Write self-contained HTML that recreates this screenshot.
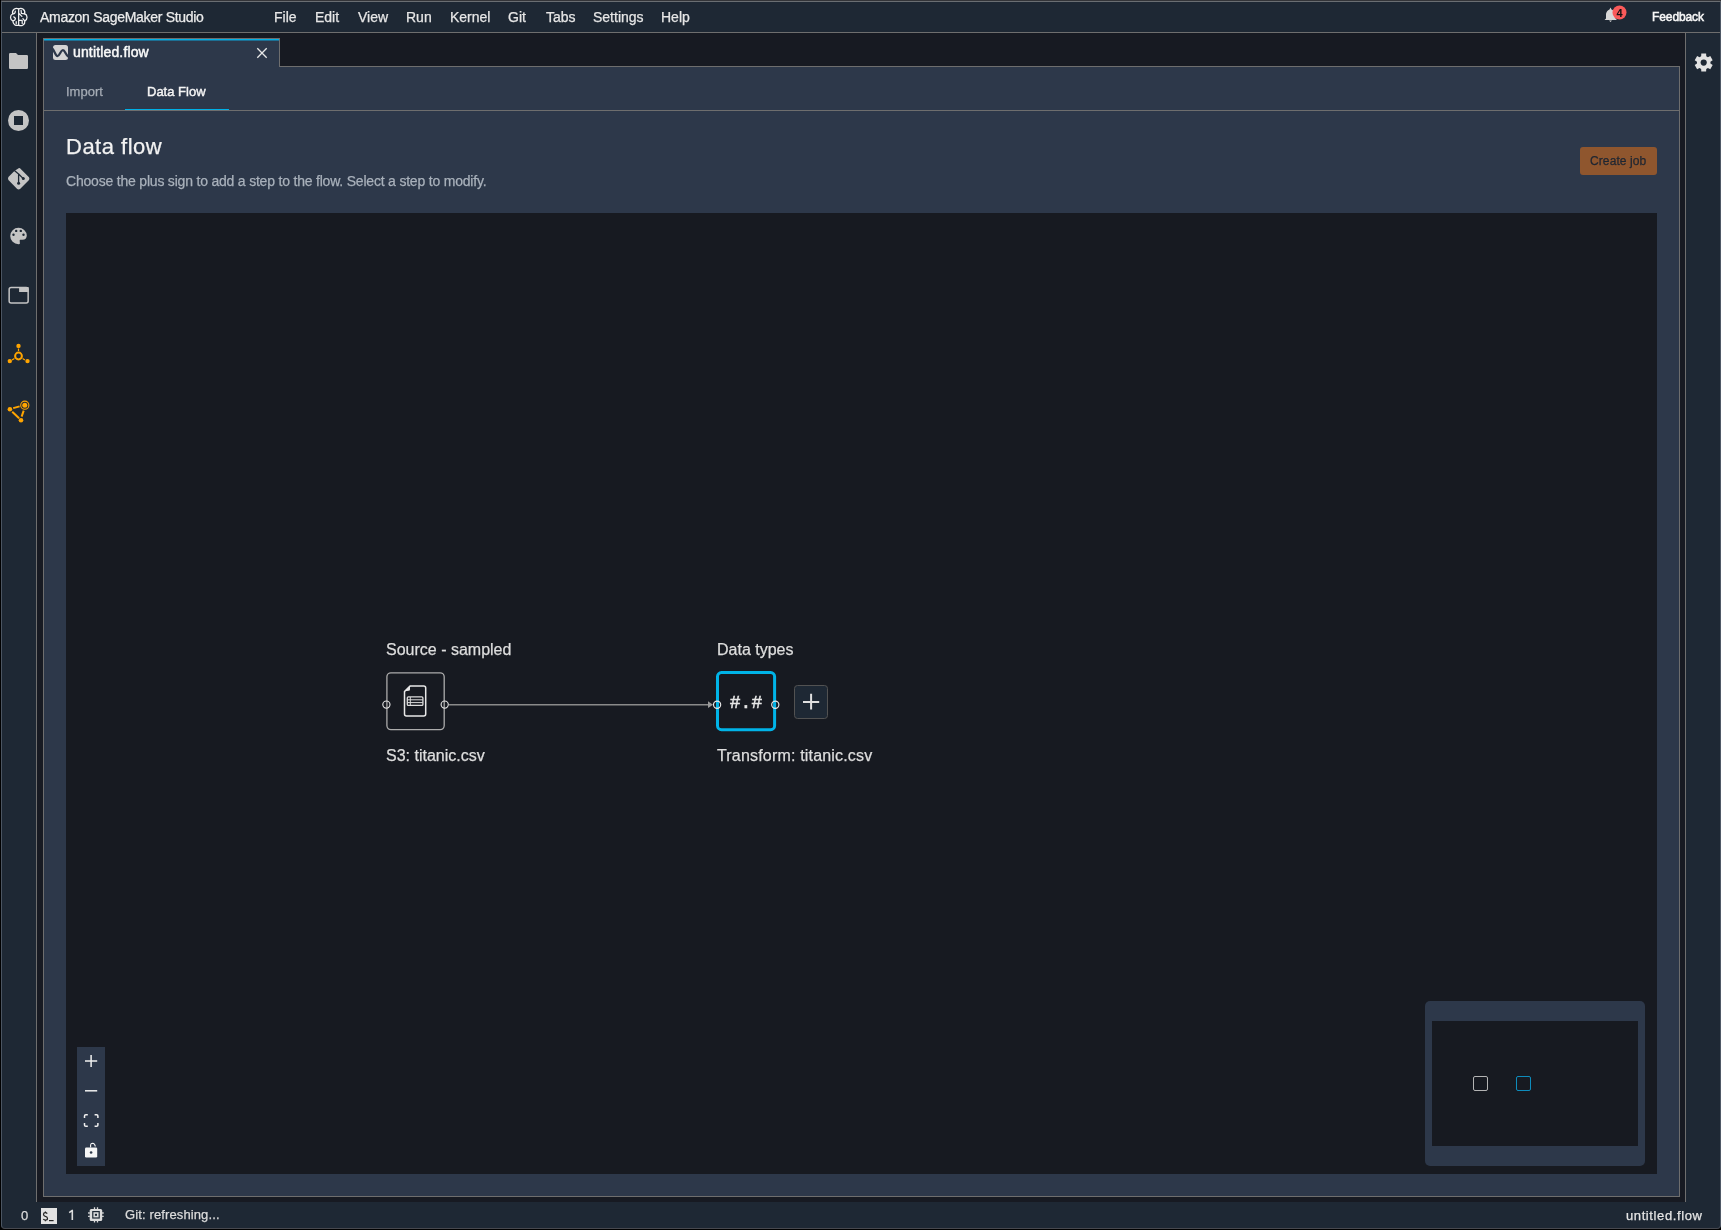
<!DOCTYPE html>
<html><head><meta charset="utf-8">
<style>
html,body{margin:0;padding:0;width:1721px;height:1230px;overflow:hidden;background:#000;}
body{position:relative;font-family:"Liberation Sans",sans-serif;}
.a{position:absolute;}
.t{position:absolute;white-space:pre;line-height:1;will-change:transform;-webkit-text-stroke-width:0.25px;}
svg.ov{position:absolute;left:0;top:0;}
</style></head><body>
<!-- window frame -->
<div class="a" style="left:1px;top:0;width:1720px;height:1px;background:#333438"></div>
<div class="a" style="left:1px;top:1px;width:1720px;height:1228px;box-sizing:border-box;border:1px solid #6a6e72;border-left-color:#4b5562;border-right-color:#4f5966;border-bottom-color:#48494f;background:#1e2834;border-radius:0 0 4px 4px"></div>
<div class="a" style="left:2px;top:32px;width:1718px;height:1px;background:#6e6e6e"></div>
<div class="a" style="left:37px;top:33px;width:1648px;height:1169px;background:#171a22"></div>
<div class="a" style="left:36px;top:33px;width:1px;height:1169px;background:#6e6e6e"></div>
<div class="a" style="left:1685px;top:33px;width:1px;height:1169px;background:#6e6e6e"></div>

<!-- panel -->
<div class="a" style="left:43px;top:66px;width:1637px;height:1131px;box-sizing:border-box;border:1px solid #6e6e6e;border-top:none;background:#2d384a"></div>
<div class="a" style="left:279px;top:66px;width:1401px;height:1px;background:#6e6e6e"></div>
<div class="a" style="left:43px;top:38px;width:237px;height:28px;box-sizing:border-box;border:1px solid #6e6e6e;border-bottom:none;background:#2d384a"></div>
<div class="a" style="left:44px;top:39px;width:235px;height:1px;background:#00b0e6"></div>
<div class="a" style="left:44px;top:40px;width:235px;height:1px;background:#1d6f93"></div>

<!-- subtabs -->
<div class="a" style="left:44px;top:110px;width:1635px;height:1px;background:#6e6e6e"></div>
<div class="a" style="left:125px;top:109px;width:104px;height:1px;background:#00b0e6"></div>

<!-- canvas -->
<div class="a" style="left:66px;top:213px;width:1591px;height:961px;background:#171a21"></div>

<!-- create job -->
<div class="a" style="left:1580px;top:147px;width:77px;height:28px;background:#8f562e;border-radius:3px"></div>

<!-- zoom controls -->
<div class="a" style="left:77px;top:1047px;width:28px;height:119px;background:#2d384a"></div>
<!-- minimap -->
<div class="a" style="left:1425px;top:1001px;width:220px;height:165px;background:#2d384a;border-radius:5px"></div>
<div class="a" style="left:1432px;top:1021px;width:206px;height:125px;background:#171a21"></div>
<div class="a" style="left:1473px;top:1076px;width:15px;height:15px;box-sizing:border-box;border:1.5px solid #b4b4b4;border-radius:2px"></div>
<div class="a" style="left:1516px;top:1076px;width:15px;height:15px;box-sizing:border-box;border:1.5px solid #0e8cbc;border-radius:2px"></div>

<!-- texts -->
<div class="t" style="left:40px;top:10px;font-size:14px;color:#ececec;letter-spacing:-0.3px">Amazon SageMaker Studio</div>
<div class="t" style="left:274px;top:10px;font-size:14px;color:#e6e6e6">File</div>
<div class="t" style="left:315px;top:10px;font-size:14px;color:#e6e6e6">Edit</div>
<div class="t" style="left:358px;top:10px;font-size:14px;color:#e6e6e6">View</div>
<div class="t" style="left:406px;top:10px;font-size:14px;color:#e6e6e6">Run</div>
<div class="t" style="left:450px;top:10px;font-size:14px;color:#e6e6e6">Kernel</div>
<div class="t" style="left:508px;top:10px;font-size:14px;color:#e6e6e6">Git</div>
<div class="t" style="left:546px;top:10px;font-size:14px;color:#e6e6e6">Tabs</div>
<div class="t" style="left:593px;top:10px;font-size:14px;color:#e6e6e6">Settings</div>
<div class="t" style="left:661px;top:10px;font-size:14px;color:#e6e6e6">Help</div>
<div class="t" style="left:1651.6px;top:11px;font-size:12px;color:#f8f8f8;letter-spacing:-0.1px;-webkit-text-stroke-width:0.5px">Feedback</div>

<div class="t" style="left:72.6px;top:45px;font-size:14px;color:#fafafa;letter-spacing:0.15px;-webkit-text-stroke-width:0.45px">untitled.flow</div>
<div class="t" style="left:66px;top:84.6px;font-size:13px;color:#a6adb6">Import</div>
<div class="t" style="left:147.4px;top:84.6px;font-size:13px;color:#f6f6f6;-webkit-text-stroke-width:0.4px">Data Flow</div>
<div class="t" style="left:66px;top:136px;font-size:22px;color:#f2f2f2;letter-spacing:0.5px">Data flow</div>
<div class="t" style="left:66px;top:174px;font-size:14px;color:#a9b1bb;letter-spacing:-0.2px">Choose the plus sign to add a step to the flow. Select a step to modify.</div>
<div class="t" style="left:1590.2px;top:155px;font-size:12px;letter-spacing:0.1px;color:#1e2632">Create job</div>

<div class="t" style="left:386px;top:642px;font-size:16px;color:#dedede">Source - sampled</div>
<div class="t" style="left:386px;top:747.5px;font-size:16px;color:#dedede">S3: titanic.csv</div>
<div class="t" style="left:717px;top:642px;font-size:16px;color:#dedede">Data types</div>
<div class="t" style="left:717px;top:748px;font-size:16px;color:#dedede;letter-spacing:0.18px">Transform: titanic.csv</div>

<div class="t" style="left:21px;top:1208.5px;font-size:13px;color:#dcdcdc">0</div>
<div class="t" style="left:124.5px;top:1208px;font-size:13px;letter-spacing:0.12px;color:#dcdcdc">Git: refreshing...</div>
<div class="t" style="left:1625.5px;top:1209px;font-size:13px;color:#e4e4e4;letter-spacing:0.6px">untitled.flow</div>

<svg class="ov" width="1721" height="1230" viewBox="0 0 1721 1230">
  <!-- brain logo -->
  <g fill="none" stroke="#f2f2f2" stroke-width="1.25" stroke-linejoin="round" stroke-linecap="round">
    <path d="M18.66,8.9 A4.1,4.1 0 0 1 24.58,13.7 A4.0,4.0 0 0 1 24.8,20.98 A4.1,4.1 0 0 1 18.66,25.1 A4.1,4.1 0 0 1 12.97,20.98 A4.0,4.0 0 0 1 12.74,13.7 A4.1,4.1 0 0 1 18.66,8.9 Z"/>
    <path d="M18.66,9.2 L18.66,24.8 M12.9,13.8 Q15.2,14 15.3,11.2 M18.66,13.2 L21.9,16.4 M24.5,13.8 L21.4,13.4 L21.1,10.4 M13,20.9 Q15.3,20.6 15.4,18.3 L13.7,16.8 M18.66,20.4 L22.2,20.4 L22.2,23.4 M24.7,20.9 L22.9,18.7 M16.2,23.8 L16.2,21.6"/>
  </g>
  <!-- folder -->
  <path d="M9,54.2 Q9,53 10.2,53 L16,53 L18,55 L26.8,55 Q28,55 28,56.2 L28,67.8 Q28,69 26.8,69 L10.2,69 Q9,69 9,67.8 Z" fill="#c4c4c4"/>
  <!-- stop circle -->
  <circle cx="18.5" cy="120.5" r="10.5" fill="#c4c4c4"/>
  <rect x="14" y="116" width="9" height="9" fill="#1e2834"/>
  <!-- git -->
  <path d="M18.6,168.2 Q19.3,167.6 20,168.2 L29,177.2 Q29.8,178.6 29,180 L20,189 Q18.6,189.8 17.2,189 L8.4,180.1 Q7.6,178.6 8.4,177.1 L14.4,171.1 Z" fill="#c4c4c4"/>
  <path d="M13.5,169.8 L18.6,174 L18.6,183.3 M18.6,174 L23.3,178.6" fill="none" stroke="#1e2834" stroke-width="1.3"/>
  <circle cx="18.6" cy="183.3" r="1.5" fill="#1e2834"/>
  <circle cx="23.3" cy="178.6" r="1.5" fill="#1e2834"/>
  <!-- palette -->
  <path d="M18.5,227.7 A8.3,8.3 0 0 1 26.8,235.5 Q26.6,239.7 22.5,239.7 L20.2,239.8 Q19.6,240 19.7,240.8 L19.9,243.5 Q19.9,244.4 18.5,244.3 A8.3,8.3 0 0 1 18.5,227.7 Z" fill="#c4c4c4"/>
  <circle cx="16.2" cy="230.9" r="1.2" fill="#1e2834"/>
  <circle cx="20.8" cy="230.9" r="1.2" fill="#1e2834"/>
  <circle cx="13.5" cy="234.7" r="1.2" fill="#1e2834"/>
  <circle cx="23.5" cy="234.7" r="1.2" fill="#1e2834"/>
  <!-- window -->
  <rect x="9.15" y="287.45" width="19" height="15.5" rx="2" fill="none" stroke="#c4c4c4" stroke-width="1.5"/>
  <rect x="19.1" y="287" width="9.5" height="5" fill="#c4c4c4"/>
  <!-- orange icon 1 -->
  <g fill="#ffa500" stroke="#ffa500">
    <circle cx="18.5" cy="345.9" r="2.2" stroke="none"/>
    <circle cx="9.8" cy="361.1" r="2.2" stroke="none"/>
    <circle cx="27.5" cy="361.1" r="2.2" stroke="none"/>
    <circle cx="18.5" cy="356" r="3.4" fill="none" stroke-width="2"/>
    <path d="M18.5,348.6 L18.5,351 M12.1,360.1 L14.4,358.6 M24.9,360.1 L22.6,358.6" stroke-width="1.2" fill="none"/>
  </g>
  <!-- orange icon 2 -->
  <g fill="#ffa500" stroke="#ffa500">
    <circle cx="24.8" cy="405.2" r="4.1" fill="none" stroke-width="1.1"/>
    <circle cx="24.8" cy="405.2" r="2.5" stroke="none"/>
    <circle cx="9.9" cy="409.3" r="2.3" stroke="none"/>
    <circle cx="21" cy="420.2" r="2.3" stroke="none"/>
    <path d="M13.2,408.1 L19.6,406.4 M12.2,411.7 L19.1,418.2 M21.6,416.6 L23.7,410.6" stroke-width="2" fill="none"/>
  </g>
  <!-- gear -->
  <path transform="translate(0,0.5)" d="M1710.43,61.15 L1712.68,59.69 L1710.28,55.52 L1707.89,56.74 L1706.25,55.80 L1706.11,53.12 L1701.29,53.12 L1701.15,55.80 L1699.51,56.74 L1697.12,55.52 L1694.72,59.69 L1696.97,61.15 L1696.97,63.05 L1694.72,64.51 L1697.12,68.68 L1699.51,67.46 L1701.15,68.40 L1701.29,71.08 L1706.11,71.08 L1706.25,68.40 L1707.89,67.46 L1710.28,68.68 L1712.68,64.51 L1710.43,63.05Z" fill="#e2e2e2"/>
  <circle cx="1703.7" cy="62.6" r="3.1" fill="#1e2834"/>
  <!-- bell -->
  <path d="M1610.5,7.5 L1611.5,9.5 Q1615,10.5 1615.5,14 L1615.5,18.5 L1617,20 L1604.5,20 L1606,18.5 L1606,14 Q1606.5,10.5 1609.5,9.5 Z" fill="#d8d8d8"/>
  <path d="M1609,20.5 L1612,20.5 L1610.5,22 Z" fill="#d8d8d8"/>
  <circle cx="1619.5" cy="12.5" r="7" fill="#fa5a5a"/>
  <text x="1619.6" y="16.6" style="font-family:'Liberation Sans'" font-size="11" font-weight="700" text-anchor="middle" fill="#111">4</text>
  <!-- tab icon -->
  <rect x="53" y="45" width="15" height="15" rx="2.5" fill="#d4d4d4"/>
  <path d="M52.3,48.6 C54.8,51.5 55.6,56.1 57.5,56.1 C59.6,56.1 60.6,50.2 62.9,50.2 C65,50.2 65.8,55.5 68.5,56.8" fill="none" stroke="#2d384a" stroke-width="2.3"/>
  <!-- close X -->
  <path d="M257.3,48.3 L266.7,57.7 M266.7,48.3 L257.3,57.7" stroke="#e8e8e8" stroke-width="1.3"/>

  <!-- node 1 -->
  <rect x="386.9" y="672.8" width="57.3" height="56.8" rx="4" fill="#171a21" stroke="#acacac" stroke-width="1.3"/>
  <line x1="449" y1="704.7" x2="709" y2="704.7" stroke="#8a8a8a" stroke-width="1.5"/>
  <path d="M708,701.3 L713,704.7 L708,708.1 Z" fill="#9a9a9a"/>
  <circle cx="386.4" cy="704.6" r="3.6" fill="none" stroke="#e0e0e0" stroke-width="1.15"/>
  <circle cx="444.7" cy="704.6" r="3.6" fill="none" stroke="#e0e0e0" stroke-width="1.15"/>
  <!-- file icon -->
  <path d="M410,686.1 L423.7,686.1 Q425.7,686.1 425.7,688.1 L425.7,714 Q425.7,716 423.7,716 L406.5,716 Q404.5,716 404.5,714 L404.5,691.5 Z" fill="none" stroke="#e8e8e8" stroke-width="1.5" stroke-linejoin="round"/>
  <path d="M410,686.3 L410,689.5 Q410,690.8 408.7,690.8 L404.8,691.2 Z" fill="#e8e8e8"/>
  <rect x="407.3" y="696.9" width="15.6" height="8.5" rx="1" fill="none" stroke="#dcdcdc" stroke-width="1.3"/>
  <path d="M407.3,699.8 L422.9,699.8 M407.3,702.6 L422.9,702.6 M410.3,697 L410.3,705.3" stroke="#dcdcdc" stroke-width="1"/>
  <!-- node 2 -->
  <rect x="717.5" y="672.6" width="57.1" height="57.1" rx="4" fill="#171a21" stroke="#00b4e8" stroke-width="3"/>
  <circle cx="717.1" cy="704.7" r="3.6" fill="none" stroke="#e8e8e8" stroke-width="1.15"/>
  <circle cx="775.3" cy="704.7" r="3.6" fill="none" stroke="#e8e8e8" stroke-width="1.15"/>
  <!-- plus button -->
  <rect x="794.5" y="685.5" width="33" height="33" rx="3" fill="#1e2834" stroke="#525252" stroke-width="1"/>
  <path d="M803,701.9 L819.2,701.9 M811.1,693.7 L811.1,709.6" stroke="#e0e0e0" stroke-width="2"/>

  <!-- zoom controls icons -->
  <path d="M85,1061 L97.2,1061 M91.1,1055 L91.1,1067" stroke="#f0f0f0" stroke-width="1.5"/>
  <path d="M85,1090.8 L97.2,1090.8" stroke="#f0f0f0" stroke-width="1.5"/>
  <path d="M84.5,1118 L84.5,1116 Q84.5,1114.7 85.8,1114.7 L87.8,1114.7 M94.6,1114.7 L96.6,1114.7 Q97.9,1114.7 97.9,1116 L97.9,1118 M97.9,1123 L97.9,1125 Q97.9,1126.3 96.6,1126.3 L94.6,1126.3 M87.8,1126.3 L85.8,1126.3 Q84.5,1126.3 84.5,1125 L84.5,1123" fill="none" stroke="#f0f0f0" stroke-width="1.5"/>
  <rect x="85" y="1147.5" width="12.2" height="10" rx="1.2" fill="#f6f6f6"/>
  <path d="M90.6,1147.5 L90.6,1145 Q90.8,1143.2 92.6,1143.2 Q95,1143.5 95.3,1146.5" fill="none" stroke="#f6f6f6" stroke-width="1.1"/>
  <circle cx="91.1" cy="1152.5" r="1.3" fill="#2d384a"/>

  <!-- status bar icons -->
  <rect x="41" y="1208" width="16" height="16" fill="#e2e2e2"/>
  <path d="M47.2,1213.6 Q46.6,1212.6 45.4,1212.6 Q43.5,1212.6 43.5,1214.3 Q43.5,1215.8 45.4,1216.3 Q47.5,1216.8 47.5,1218.5 Q47.5,1220.1 45.4,1220.1 Q44,1220.1 43.3,1219 M45.4,1211.5 L45.4,1212.6 M45.4,1220.1 L45.4,1221.3" fill="none" stroke="#222" stroke-width="1.2"/>
  <path d="M49,1220.6 L53.6,1220.6" stroke="#222" stroke-width="1.2"/>
  <path d="M69.2,1212.6 L72.3,1210.4 L72.3,1220.1" fill="none" stroke="#dcdcdc" stroke-width="1.6" stroke-linejoin="round"/>
  <rect x="89.7" y="1208.9" width="12.5" height="12" rx="1.5" fill="#dcdcdc"/>
  <rect x="92.2" y="1211" width="7.6" height="7.6" fill="#1e2834"/>
  <rect x="93.4" y="1212.2" width="5.2" height="5.2" fill="#dcdcdc"/>
  <rect x="94.9" y="1213.8" width="2.1" height="2" fill="#1e2834"/>
  <path d="M94.5,1207.3 L94.5,1209 M97.5,1207.3 L97.5,1209 M94.5,1220.8 L94.5,1222.6 M97.5,1220.8 L97.5,1222.6 M88.1,1213 L89.8,1213 M88.1,1216.4 L89.8,1216.4 M102.1,1213 L103.7,1213 M102.1,1216.4 L103.7,1216.4" stroke="#dcdcdc" stroke-width="1.3"/>
</svg>
<div class="t" style="left:716px;top:694px;width:60px;text-align:center;font-family:'Liberation Mono',monospace;font-size:18px;color:#e6e6e6;-webkit-text-stroke-width:0.5px">#.#</div>
</body></html>
